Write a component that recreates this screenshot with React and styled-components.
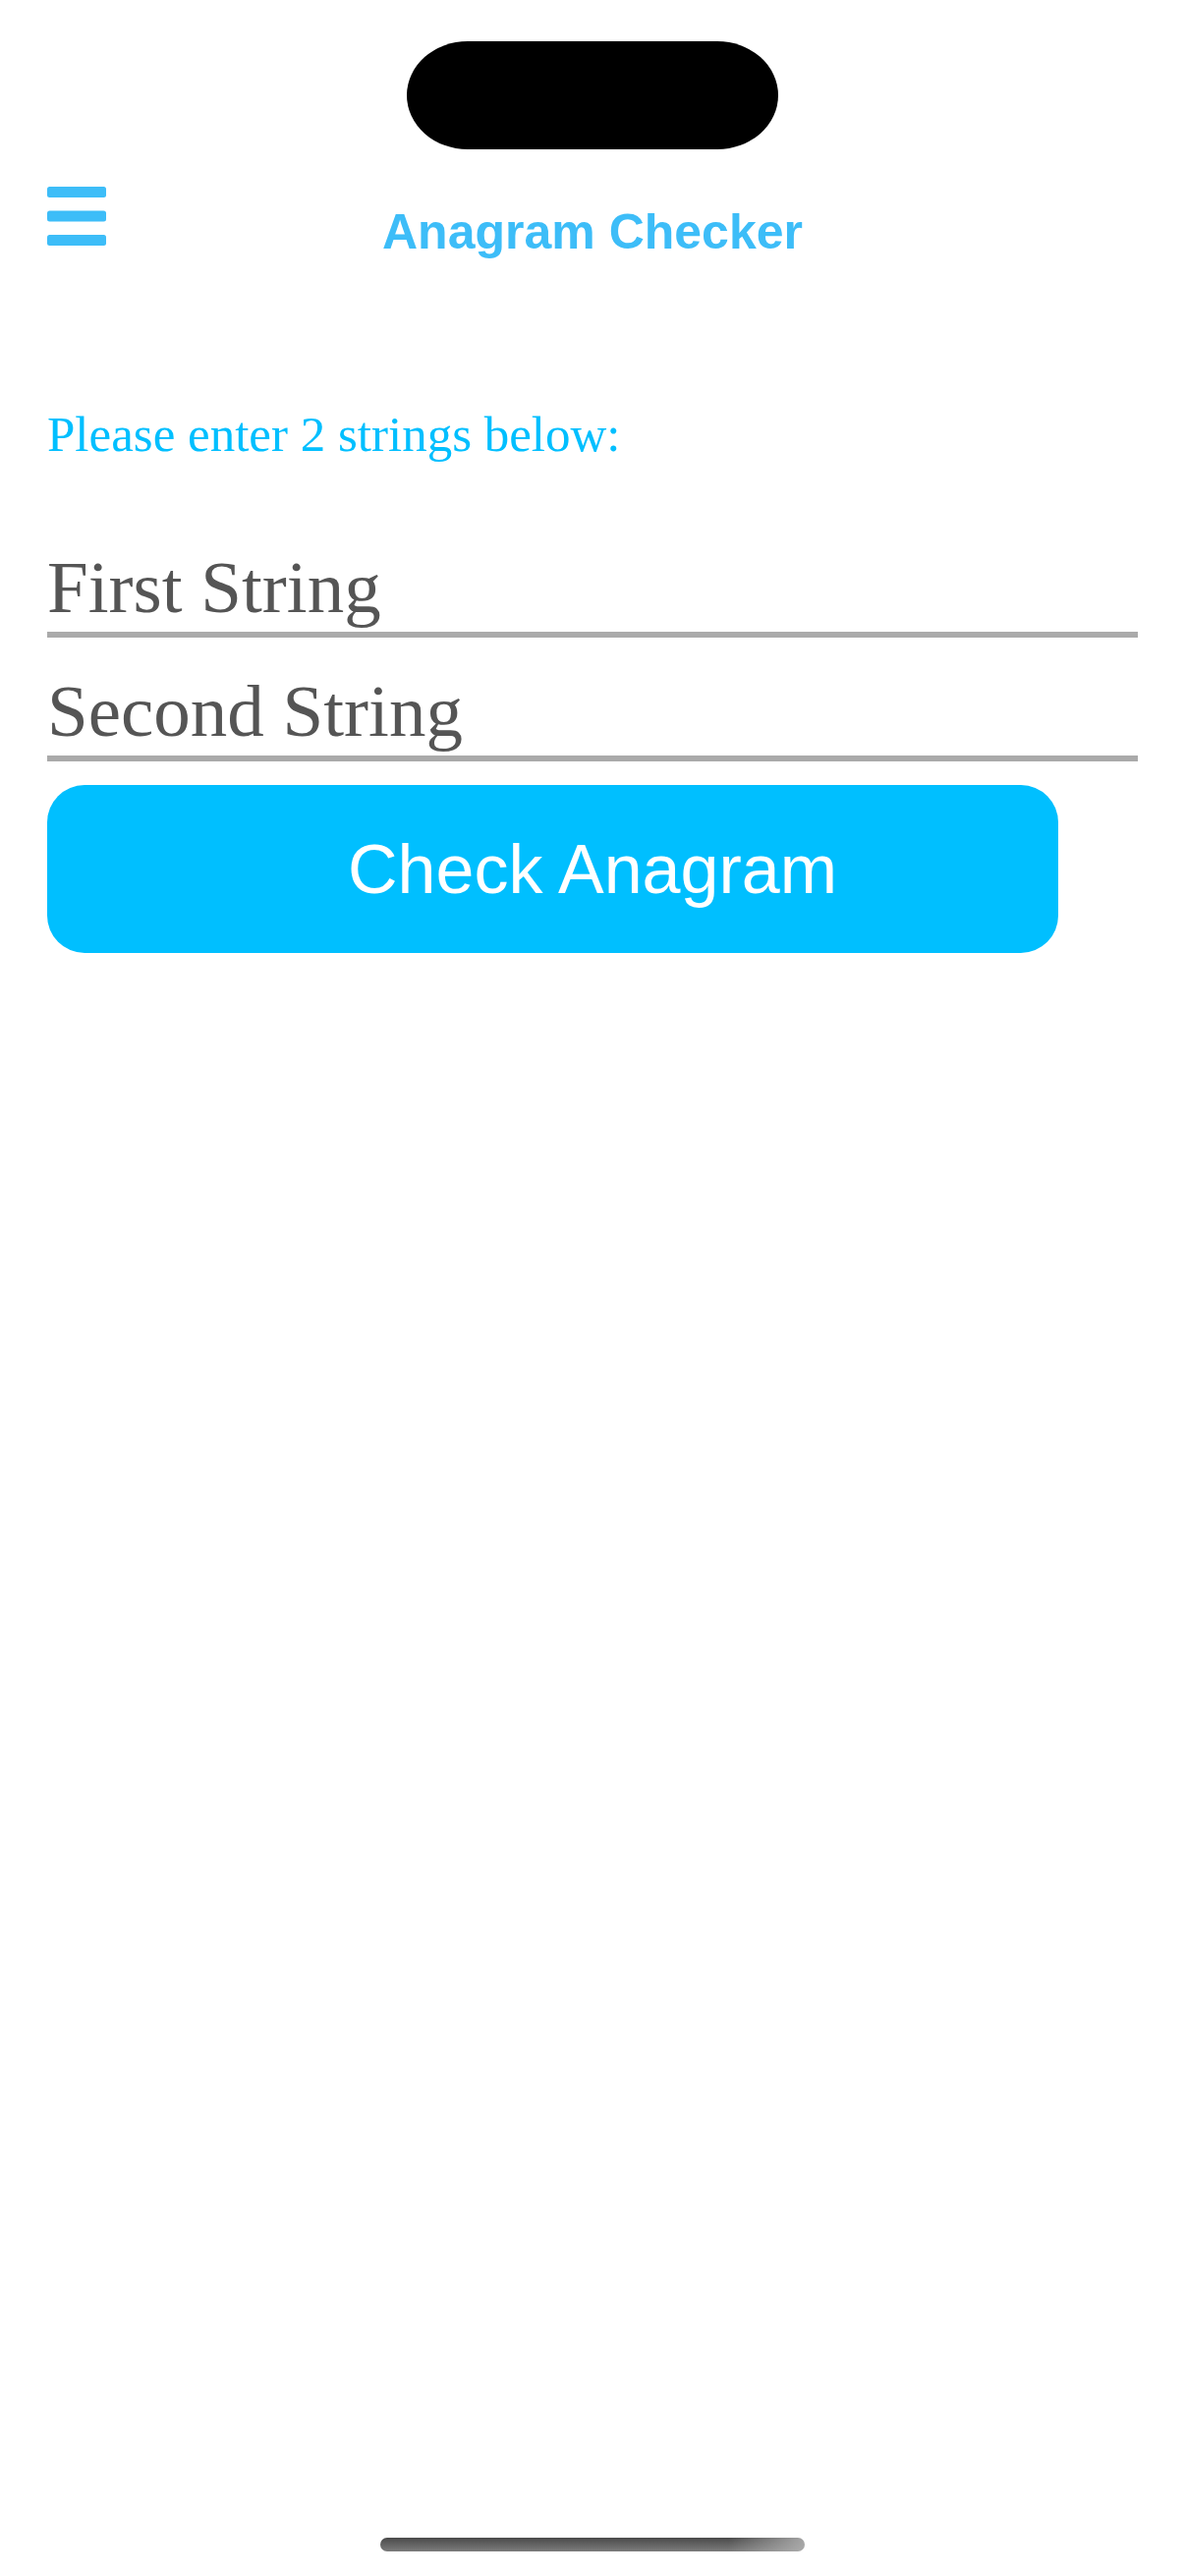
import React from 'react';
import styled, { createGlobalStyle } from 'styled-components';

const GlobalStyle = createGlobalStyle`
    html, body {
        margin: 0;
        padding: 0;
        background: #ffffff;
    }
    * {
        box-sizing: border-box;
    }
`;

const Screen = styled.div`
    width: 1206px;
    min-height: 2622px;
    display: flex;
    flex-direction: column;
    background: #ffffff;
`;

const StatusBar = styled.div`
    height: 190px;
    display: flex;
    justify-content: center;
    padding-top: 42px;
`;

const Island = styled.div`
    width: 378px;
    height: 110px;
    background: #000000;
    border-radius: 62px / 55px;
`;

const Header = styled.div`
    display: grid;
    grid-template-columns: 1fr auto 1fr;
    align-items: start;
    height: 68px;
    padding: 0 48px;
`;

const MenuButton = styled.button`
    justify-self: start;
    width: 60px;
    height: 60px;
    padding: 0;
    border: none;
    background: none;
    cursor: pointer;
    svg {
        display: block;
    }
`;

const Title = styled.h1`
    margin: 21px 0 0;
    font-family: "Liberation Sans", Arial, sans-serif;
    font-weight: 700;
    font-size: 50px;
    line-height: 50px;
    color: #3dbdf8;
    white-space: nowrap;
`;

const Content = styled.main`
    display: flex;
    flex-direction: column;
    padding: 0 48px;
`;

const Prompt = styled.p`
    margin: 159px 0 92px;
    font-family: "Liberation Serif", "Times New Roman", serif;
    font-size: 51px;
    line-height: 51px;
    color: #00bfff;
`;

const StringInput = styled.input`
    display: block;
    width: 1110px;
    height: 89px;
    margin: ${({ $gap }) => $gap || 0} 0 0;
    padding: 0 0 8px;
    border: none;
    border-bottom: 6px solid #aaaaaa;
    outline: none;
    background: transparent;
    font-family: "Liberation Serif", "Times New Roman", serif;
    font-size: 75px;
    color: #555555;
    &::placeholder {
        color: #555555;
        opacity: 1;
    }
`;

const CheckButton = styled.button`
    width: 1029px;
    height: 171px;
    margin-top: 24px;
    padding: 0 0 0 81px;
    border: none;
    border-radius: 38px;
    background: #00bfff;
    font-family: "Liberation Sans", Arial, sans-serif;
    font-size: 70px;
    color: #ffffff;
    text-align: center;
    cursor: pointer;
`;

const HomeIndicator = styled.div`
    align-self: center;
    width: 432px;
    height: 14px;
    margin: auto 0 25px;
    border-radius: 7px;
    background:
        linear-gradient(to right, rgba(180,180,180,0) 82%, rgba(180,180,180,0.85) 100%),
        linear-gradient(to bottom, #4a4a4a, #7c7c7c);
`;

const MenuIcon = () => (
    <svg width="60" height="60" viewBox="0 0 60 60" fill="#3dbdf8">
        <rect x="0" y="0" width="60" height="11" rx="2.5" />
        <rect x="0" y="24.5" width="60" height="11" rx="2.5" />
        <rect x="0" y="49" width="60" height="11" rx="2.5" />
    </svg>
);

export default function App() {
    const [first, setFirst] = React.useState('');
    const [second, setSecond] = React.useState('');

    return (
        <>
            <GlobalStyle />
            <Screen>
                <StatusBar>
                    <Island />
                </StatusBar>
                <Header>
                    <MenuButton aria-label="Menu">
                        <MenuIcon />
                    </MenuButton>
                    <Title>Anagram Checker</Title>
                    <div />
                </Header>
                <Content>
                    <Prompt>Please enter 2 strings below:</Prompt>
                    <StringInput
                        placeholder="First String"
                        value={first}
                        onChange={(e) => setFirst(e.target.value)}
                    />
                    <StringInput
                        $gap="37px"
                        placeholder="Second String"
                        value={second}
                        onChange={(e) => setSecond(e.target.value)}
                    />
                    <CheckButton>Check Anagram</CheckButton>
                </Content>
                <HomeIndicator />
            </Screen>
        </>
    );
}
